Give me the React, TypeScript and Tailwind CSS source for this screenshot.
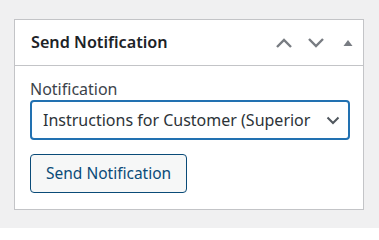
import React from "react";

export default function App() {
  const font = { fontFamily: '"Noto Sans", "Open Sans", sans-serif' };
  return (
    <div className="w-[379px] h-[228px] bg-[#f0f0f1] pt-[19px] pl-[14px]" style={font}>
      <div className="w-[350px] h-[191px] bg-white border border-[#c3c4c7] flex flex-col">
        <div className="h-[46px] border-b border-[#c3c4c7] flex items-center justify-between pl-[16px] pr-[10px]">
          <h2 className="text-[16.2px] font-semibold text-[#1d2327] leading-none">Send Notification</h2>
          <div className="flex items-center">
            <svg width="18" height="12" viewBox="0 0 18 12" className="mr-[14px]">
              <path d="M2 10 L9 3 L16 10" fill="none" stroke="#787c82" strokeWidth="2.4" />
            </svg>
            <svg width="18" height="12" viewBox="0 0 18 12" className="mr-[18px]">
              <path d="M2 2 L9 9 L16 2" fill="none" stroke="#787c82" strokeWidth="2.4" />
            </svg>
            <svg width="10" height="8" viewBox="0 0 10 8">
              <path d="M0.5 7 L5 1 L9.5 7 Z" fill="#787c82" />
            </svg>
          </div>
        </div>
        <div className="pl-[15px] pr-[13px] pt-[13px]">
          <label className="block text-[16px] text-[#3c434a] leading-[20px] mb-[1px]">Notification</label>
          <div className="relative h-[40px] w-[320px] border-2 border-[#2271b1] rounded-[4px] flex items-center pl-[11px] pr-[36px] overflow-hidden">
            <span className="text-[16px] text-[#2c3338] whitespace-nowrap overflow-hidden">Instructions for Customer (Superior Service)</span>
            <svg width="14" height="9" viewBox="0 0 14 9" className="absolute right-[8px] top-[14px]">
              <path d="M1.5 1.5 L7 7 L12.5 1.5" fill="none" stroke="#50575e" strokeWidth="2" />
            </svg>
          </div>
          <button className="mt-[14px] h-[39px] px-[15px] border border-[#0a4b78] rounded-[4px] bg-[#f6f7f7] text-[#0a4b78] text-[15.5px] leading-none">
            Send Notification
          </button>
        </div>
      </div>
    </div>
  );
}
